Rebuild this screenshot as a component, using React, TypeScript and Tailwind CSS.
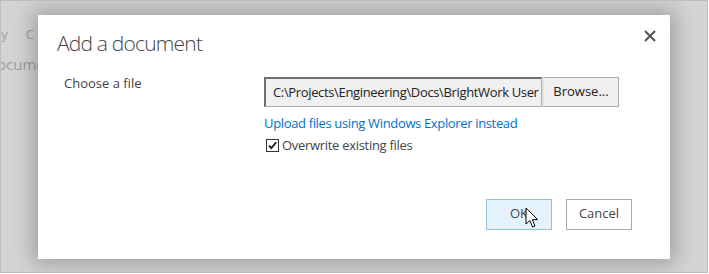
import React from "react";

export default function App() {
  const font = { fontFamily: '"Open Sans", "Noto Sans", sans-serif' };
  return (
    <div className="w-[709px] h-[274px] bg-white" style={font}>
      <div className="relative w-[708px] h-[273px] border border-[#bdbdbd] bg-[#d4d4d4] overflow-hidden">
        <div className="flex flex-col pt-[24px] text-[13px] text-[#9e9e9e]">
          <div className="flex gap-[18px] -ml-[3px]">
            <span>ly</span>
            <span>C</span>
          </div>
          <div className="-ml-[4px] mt-[8px] text-[15px]">ocuments</div>
        </div>

        <div className="absolute left-[37px] top-[14px] w-[632px] h-[244px] bg-white shadow-[0_0_20px_5px_rgba(0,0,0,0.25)] text-[#444]">
          <div className="flex items-start justify-between pl-[19px] pr-[14px] pt-[14px]">
            <h1 className="text-[21px] font-light leading-[28px] text-[#444] tracking-[-0.8px]">Add a document</h1>
            <svg width="12" height="12" viewBox="0 0 12 12" className="mt-[1px]">
              <path d="M1 1 L11 11 M11 1 L1 11" stroke="#555" strokeWidth="2" />
            </svg>
          </div>

          <div className="flex mt-[20px] pl-[26px]">
            <div className="w-[200px] text-[13px] leading-[18px] -mt-[3px] text-[#444]">Choose a file</div>
            <div className="flex flex-col">
              <div className="flex">
                <div className="w-[278px] h-[30px] bg-[#f0f0f0] border border-[#adadad] border-t-[#6e6e6e] border-l-[#6e6e6e] border-t-2 border-l-2 flex items-center pl-[7px] overflow-hidden whitespace-nowrap text-[13px] text-[#222] tracking-[-0.35px]">
                  C:\Projects\Engineering\Docs\BrightWork User
                </div>
                <div className="w-[77px] h-[30px] bg-[#efefef] border border-[#adadad] border-l-[#e3e3e3] border-l-2 flex items-center justify-center text-[13px] text-[#222]">
                  Browse...
                </div>
              </div>
              <a className="mt-[7px] text-[13px] leading-[18px] text-[#0072c6] tracking-[-0.35px]">Upload files using Windows Explorer instead</a>
              <label className="flex items-center mt-[4px] ml-[2px] text-[13px] text-[#444] tracking-[-0.3px]">
                <span className="w-[13px] h-[13px] border border-[#333] bg-white flex items-center justify-center mr-[3px]">
                  <svg width="11" height="11" viewBox="0 0 11 11">
                    <path d="M2 5.5 L4.3 8.2 L9.2 2.2" stroke="#111" strokeWidth="1.8" fill="none" />
                  </svg>
                </span>
                Overwrite existing files
              </label>
            </div>
          </div>

          <div className="flex justify-end gap-[14px] pr-[38px] mt-[43px]">
            <div className="relative w-[66px] h-[31px] bg-[#e5f1fb] border border-[#92c0e0] flex items-center justify-center text-[13px] text-[#444]">
              OK
              <svg width="14" height="22" viewBox="0 0 14 22" className="absolute left-[38px] top-[7px]">
                <path d="M1 1 L1 17 L4.8 13.6 L7.6 20 L10 19 L7.3 12.8 L12.5 12.5 Z" fill="#fff" stroke="#000" strokeWidth="1" strokeLinejoin="miter" />
              </svg>
            </div>
            <div className="w-[66px] h-[31px] bg-white border border-[#acacac] flex items-center justify-center text-[13px] text-[#444]">
              Cancel
            </div>
          </div>
        </div>
      </div>
    </div>
  );
}
